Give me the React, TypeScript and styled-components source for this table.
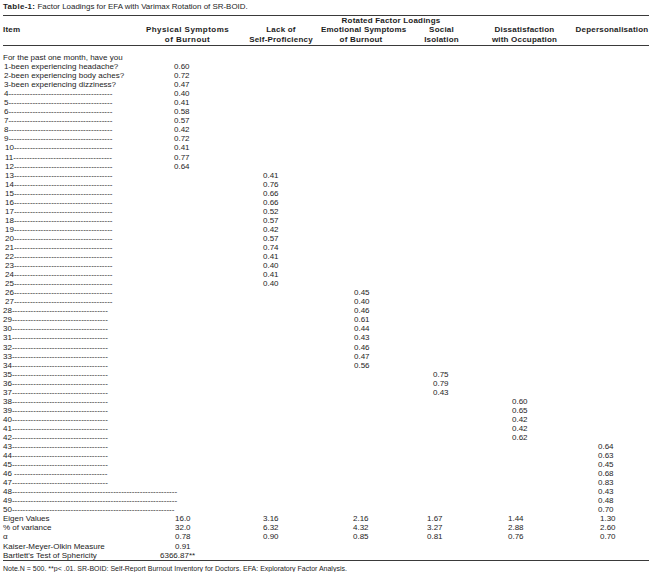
import styled, { createGlobalStyle } from 'styled-components';

const GlobalStyle = createGlobalStyle`
    html, body {
        margin: 0;
        padding: 0;
        background: #ffffff;
    }
`;

const COLS = '138px 93px 87px 80px 81px 85px 82px';

const Page = styled.div`
    width: 646px;
    padding: 0 1px 0 3px;
    font-family: "Liberation Sans", Arial, sans-serif;
    color: #1d1d1d;
`;

const Title = styled.div`
    height: 14.5px;
    line-height: 14px;
    font-size: 7.95px;
    white-space: nowrap;
    b {
        letter-spacing: 0.3px;
    }
`;

const Head = styled.div`
    display: grid;
    grid-template-columns: ${COLS};
    grid-template-rows: 9.5px 9.5px 9.5px;
    border-top: 1.5px solid #3a3a3a;
    border-bottom: 1.5px solid #3a3a3a;
    padding-bottom: 0.5px;
    font-size: 8px;
    font-weight: bold;
    letter-spacing: 0.2px;
    line-height: 9.5px;
`;

const Group = styled.div`
    grid-column: 2 / -1;
    grid-row: 1;
    text-align: center;
    padding-right: 8px;
    white-space: nowrap;
`;

const HeadCell = styled.div<{ $col: number; $row: number; $pad?: number; $wide?: boolean }>`
    grid-column: ${(p) => p.$col} / span 1;
    grid-row: ${(p) => p.$row} / span 1;
    text-align: ${(p) => (p.$col === 1 ? 'left' : 'center')};
    padding-left: ${(p) => p.$pad ?? 0}px;
    letter-spacing: ${(p) => (p.$wide ? '0.45px' : '0.2px')};
    white-space: nowrap;
`;

const Body = styled.div`
    padding-top: 7.5px;
    border-bottom: 1.5px solid #3a3a3a;
    font-size: 8px;
    line-height: 9.05px;
`;

const Row = styled.div`
    display: grid;
    grid-template-columns: ${COLS};
    height: 9.05px;
    white-space: nowrap;
`;

const Label = styled.div<{ $indent?: number }>`
    padding-left: ${(p) => p.$indent ?? 0}px;
`;

const Value = styled.div<{ $pad: number }>`
    padding-left: ${(p) => p.$pad}px;
`;

const Note = styled.div`
    padding-top: 3px;
    font-size: 7px;
    line-height: 10px;
    white-space: nowrap;
`;

const LOAD_PAD = [33, 29, 33, 32, 30, 31];
const SUM_PAD = [34, 29, 32, 26, 26, 33];

// factor groups: [first item, values]
const GROUPS: [number, string[]][] = [
    [1, ['0.60', '0.72', '0.47', '0.40', '0.41', '0.58', '0.57', '0.42', '0.72', '0.41', '0.77', '0.64']],
    [13, ['0.41', '0.76', '0.66', '0.66', '0.52', '0.57', '0.42', '0.57', '0.74', '0.41', '0.40', '0.41', '0.40']],
    [26, ['0.45', '0.40', '0.46', '0.61', '0.44', '0.43', '0.46', '0.47', '0.56']],
    [35, ['0.75', '0.79', '0.43']],
    [38, ['0.60', '0.65', '0.42', '0.42', '0.62']],
    [43, ['0.64', '0.63', '0.45', '0.68', '0.83', '0.43', '0.48', '0.70']],
];

const QUESTIONS: Record<number, string> = {
    1: '1-been experiencing headache?',
    2: '2-been experiencing body aches?',
    3: '3-been experiencing dizziness?',
};

function dashEnd(n: number) {
    if (n <= 9) return 110;
    if (n <= 27) return 112;
    if (n <= 47) return 107;
    if (n === 50) return 175;
    return 178;
}

function itemLabel(n: number) {
    if (QUESTIONS[n]) return QUESTIONS[n];
    const start = n >= 10 && n <= 27 ? 5 : 3;
    const prefix = n === 46 ? '46 ' : `${n}`;
    const used = start + String(n).length * 4.45 + (n === 46 ? 2.2 : 0);
    const count = Math.round((dashEnd(n) - used) / 2.66);
    return prefix + '-'.repeat(count);
}

const items = Array.from({ length: 50 }, (_, i) => {
    const n = i + 1;
    let col = 0;
    let val = '';
    GROUPS.forEach(([first, vals], g) => {
        if (n >= first && n < first + vals.length) {
            col = g;
            val = vals[n - first];
        }
    });
    return { n, col, val };
});

const SUMMARY: [string, string[]][] = [
    ['Eigen Values', ['16.0', '3.16', '2.16', '1.67', '1.44', '1.30']],
    ['% of variance', ['32.0', '6.32', '4.32', '3.27', '2.88', '2.60']],
    ['\u03b1', ['0.78', '0.90', '0.85', '0.81', '0.76', '0.70']],
    ['Kaiser-Meyer-Olkin Measure', ['0.91']],
    ["Bartlett's Test of Sphericity", ['6366.87**']],
];

function App() {
    return (
        <Page>
            <GlobalStyle />
            <Title>
                <b>Table-1:</b> Factor Loadings for EFA with Varimax Rotation of SR-BOID.
            </Title>
            <Head>
                <Group>Rotated Factor Loadings</Group>
                <HeadCell $col={1} $row={2}>Item</HeadCell>
                <HeadCell $col={2} $row={2} $wide>Physical Symptoms</HeadCell>
                <HeadCell $col={2} $row={3} $wide>of Burnout</HeadCell>
                <HeadCell $col={3} $row={2} $pad={7}>Lack of</HeadCell>
                <HeadCell $col={3} $row={3} $pad={7}>Self-Proficiency</HeadCell>
                <HeadCell $col={4} $row={2}>Emotional Symptoms</HeadCell>
                <HeadCell $col={4} $row={3}>of Burnout</HeadCell>
                <HeadCell $col={5} $row={2}>Social</HeadCell>
                <HeadCell $col={5} $row={3}>Isolation</HeadCell>
                <HeadCell $col={6} $row={2}>Dissatisfaction</HeadCell>
                <HeadCell $col={6} $row={3}>with Occupation</HeadCell>
                <HeadCell $col={7} $row={2} $pad={8}>Depersonalisation</HeadCell>
            </Head>
            <Body>
                <Row>
                    <Label>For the past one month, have you</Label>
                </Row>
                {items.map((it) => (
                    <Row key={it.n}>
                        <Label $indent={it.n >= 10 && it.n <= 27 ? 2 : it.n <= 9 ? 1 : 0}>{itemLabel(it.n)}</Label>
                        {Array.from({ length: 6 }, (_, c) => (
                            <Value key={c} $pad={LOAD_PAD[c]}>{c === it.col ? it.val : ''}</Value>
                        ))}
                    </Row>
                ))}
                {SUMMARY.map(([label, vals], r) => (
                    <Row key={label}>
                        <Label>{label}</Label>
                        {vals.map((v, c) => (
                            <Value key={c} $pad={r === 4 ? 19 : SUM_PAD[c]}>{v}</Value>
                        ))}
                    </Row>
                ))}
            </Body>
            <Note>
                Note.N = 500. **p&lt; .01. SR-BOID: Self-Report Burnout Inventory for Doctors. EFA: Exploratory Factor Analysis.
            </Note>
        </Page>
    );
}

export default App;
